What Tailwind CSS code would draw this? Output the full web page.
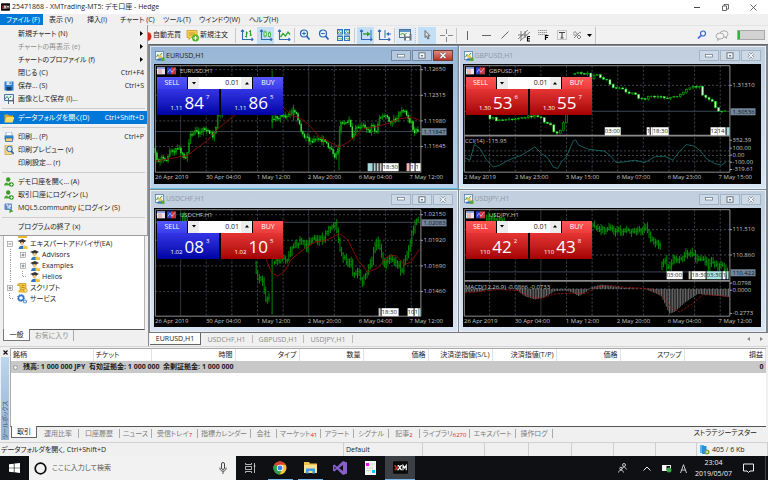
<!DOCTYPE html>
<html lang="ja">
<head>
  <meta charset="UTF-8" />
  <meta name="viewport" content="width=device-width, initial-scale=1" />
  <title>25471868 - XMTrading-MT5: デモ口座 - Hedge</title>
  <script src="https://cdn.jsdelivr.net/npm/@tailwindcss/browser@4"></script>
  <style>
    body {
      font-family: 'Open Sans', 'Noto Sans CJK JP', sans-serif;
      font-feature-settings: 'palt';
    }
    svg text {
      font-size: 6px;
    }
  </style>
</head>
<body class="h-screen flex flex-col overflow-hidden bg-[#f0f0f0] text-[7px] leading-[10px] text-[#1c1c1c] whitespace-nowrap">

  <!-- icons used more than once -->
  <svg class="hidden">
    <symbol id="i-chart" viewBox="0 0 10 10"><rect x=".5" y=".5" width="8" height="8" fill="#eef4fa" stroke="#5c7fa3" stroke-width=".8"/><path d="M1.5 6 3 3.5 4.5 5 7 2" fill="none" stroke="#3b9c3b"/><circle cx="5" cy="5.5" r="1.7" fill="#f0c048"/><path d="M2 9.5c0-3 6-3 6 0z" fill="#2f6fb5"/><path d="M6 6.5h3.5V10H6z" fill="#58a83a"/></symbol>
    <symbol id="i-user" viewBox="0 0 10 10"><circle cx="4.2" cy="2.5" r="2.2" fill="#3c9a2c"/><path d="M0 8.5C0 4 8 4 8.5 8.5z" fill="#46ab33"/><path d="M3 5l1.2 2L5.5 5z" fill="#fff"/><circle cx="7.5" cy="7.5" r="2.3" fill="#2f9424"/><path d="M6.2 7.5h2.6M7.5 6.2v2.6" stroke="#fff" stroke-width=".8"/></symbol>
    <symbol id="i-ea" viewBox="0 0 10 10"><path d="M0 2 5 0l4 2-4 2z" fill="#333"/><path d="M2.5 2.8h4v1.5h-4z" fill="#555"/><circle cx="4.5" cy="4.7" r="1.6" fill="#f1c27a"/><path d="M1 10c0-4.500 7-4.500 7 0z" fill="#2e78c4"/><path d="M5.500 6.500h1.800l.5.700H10V10H5.500z" fill="#f2c43c"/></symbol>
    <symbol id="i-plus" viewBox="0 0 6 6"><rect x=".5" y=".5" width="5" height="5" fill="#fff" stroke="#9a9a9a" stroke-width=".7"/><path d="M1.500 3h3M3 1.500v3" stroke="#456" stroke-width=".7"/></symbol>
    <symbol id="i-minus" viewBox="0 0 6 6"><rect x=".5" y=".5" width="5" height="5" fill="#fff" stroke="#9a9a9a" stroke-width=".7"/><path d="M1.500 3h3" stroke="#456" stroke-width=".7"/></symbol>
    <symbol id="i-axes" viewBox="0 0 14 12"><path d="M2.500 1v9.500H13M1 2.500 2.500 1 4 2.500M11.500 9 13 10.500 11.500 12" fill="none" stroke="#2f6cb8" stroke-width="1.100"/></symbol>
    <symbol id="i-xm" viewBox="0 0 12 10"><rect width="12" height="10" rx="1" fill="#0a0a0a"/><path d="M.8 3H2l2.500 4.200H3.200zM4 3h1.300L2 7.200H.8z" fill="#e03030"/><path d="M3.500 3h1.200l2.800 4.200H6.200zM6.200 3h1.200L4.500 7.200H3.300z" fill="#fff"/><path d="M8 7.200V3.300l1.300 2 1.300-2v3.900" fill="none" stroke="#fff" stroke-width=".9"/></symbol>
  </svg>

  <header class="h-[14px] shrink-0 bg-white flex items-center pl-px">
    <svg class="w-[9px] h-2 mr-[2px]"><use href="#i-xm"/></svg>
    <h1 class="flex-1">25471868 - XMTrading-MT5: デモ口座 - Hedge</h1>
    <button aria-label="最小化" class="w-7 h-full flex items-center justify-center"><svg width="7" height="7" fill="none" stroke="#444"><path d="M0 3.500h6"/></svg></button>
    <button aria-label="元に戻す" class="w-7 h-full flex items-center justify-center"><svg width="7" height="7" fill="none" stroke="#444" stroke-width=".8"><path d="M.5 2h4v4.500h-4zM2 2V.5h4.500V5h-2"/></svg></button>
    <button aria-label="閉じる" class="w-7 h-full flex items-center justify-center mr-px"><svg width="7" height="7" fill="none" stroke="#444" stroke-width=".8"><path d="M.5.5l6 6M6.500.5l-6 6"/></svg></button>
  </header>

  <nav class="relative z-20 h-3 shrink-0 flex border-b border-[#e4e4e4]">
    <button class="w-[43px] h-[11px] pl-[6px] text-left bg-[#0078d7] text-white">ファイル (F)</button>
    <button class="w-[38px] pl-[6px] text-left">表示 (V)</button>
    <button class="w-[33px] pl-[6px] text-left">挿入(I)</button>
    <button class="w-[43px] pl-[6px] text-left">チャート (C)</button>
    <button class="w-9 pl-[6px] text-left">ツール(T)</button>
    <button class="w-[50px] pl-[6px] text-left">ウインドウ(W)</button>
    <button class="w-10 pl-[6px] text-left">ヘルプ(H)</button>

    <!-- file menu -->
    <div id="fileMenu" class="absolute left-0 top-[11px] w-[148px] bg-[#f0f0f0] border-r border-b border-[#9c9c9c] py-[2px]"></div>
  </nav>

  <div class="h-[18px] shrink-0 flex items-center bg-[#f1f1f1] pl-[147px]">
    <svg width="5" height="12"><circle cx="0" cy="7.500" r="4.500" fill="#d42a1e"/></svg>
    <button class="w-[34px] text-left pl-px">自動売買</button>
    <button class="w-[49px] flex items-center">
      <svg width="14" height="13"><path d="M1 1.500h10v7H5l-2 2v-2H1z" fill="#f5cf55" stroke="#c89a24" stroke-width=".8"/><path d="M3 4h6M3 6h6" stroke="#b58a20" stroke-width=".8"/><circle cx="9.500" cy="9" r="3.500" fill="#52b52a"/><path d="M7.500 9h4M9.500 7v4" stroke="#fff" stroke-width="1.200"/></svg>新規注文</button>
    <span class="w-px h-[15px] bg-[#c9c9c9]"></span>
    <button aria-label="バーチャート" class="w-[21px] flex justify-center"><svg width="14" height="12"><use href="#i-axes"/><path d="M6.500 2.500v6M5 7.500h1.500M6.500 4H8M10.500 1v6M9 2.500h1.500M10.500 6H12" stroke="#2aa62a" stroke-width="1.200"/></svg></button>
    <button aria-label="ローソク足" class="w-[17px] h-[17px] bg-[#c3dff5] flex justify-center items-center"><svg width="14" height="12"><use href="#i-axes"/><path d="M6 1.500v7M10.500 2.500v6" stroke="#2aa62a" stroke-width=".8"/><rect x="5" y="3" width="2.200" height="4" fill="#eefaec" stroke="#2aa62a" stroke-width=".8"/><rect x="9.400" y="4" width="2.200" height="3.500" fill="#eefaec" stroke="#2aa62a" stroke-width=".8"/></svg></button>
    <button aria-label="ラインチャート" class="w-[20px] flex justify-center"><svg width="14" height="12"><use href="#i-axes"/><path d="M3.500 8 6 4.500 8.500 7 11 3l2 2.500" fill="none" stroke="#2aa62a" stroke-width="1.300"/></svg></button>
    <span class="w-px h-[15px] bg-[#c9c9c9]"></span>
    <button aria-label="拡大" class="w-5 flex justify-center"><svg width="12" height="12" fill="none" stroke="#2c66b4"><circle cx="5" cy="4.500" r="3.500" fill="#eaf4fc" stroke-width="1.200"/><path d="M3.200 4.500h3.600M5 2.700v3.600"/><path d="m7.500 7 3 3.500" stroke-width="1.800"/></svg></button>
    <button aria-label="縮小" class="w-[18px] flex justify-center"><svg width="12" height="12" fill="none" stroke="#2c66b4"><circle cx="5" cy="4.500" r="3.500" fill="#eaf4fc" stroke-width="1.200"/><path d="M3.200 4.500h3.600"/><path d="m7.500 7 3 3.500" stroke-width="1.800"/></svg></button>
    <button aria-label="整列" class="w-[21px] flex justify-center"><svg width="13" height="12"><path d="M0 0h6v5.500H0zM7 0h6v5.500H7zM0 6.500h6V12H0zM7 6.500h6V12H7z" fill="#2f74c0"/><path d="M1 1.500h4v3H1zM8 1.500h4v3H8zM1 8h4v3H1zM8 8h4v3H8z" fill="#e4f3e0"/><path d="m1 4 1.500-1.500L4 4l1-1.500M8 4l1.500-1.500L11 4l1-1.500M1 10.500 2.500 9 4 10.500 5 9M8 10.500 9.500 9l1.500 1.500L12 9" fill="none" stroke="#3ba53b" stroke-width=".8"/></svg></button>
    <span class="w-px h-[15px] bg-[#c9c9c9] mr-[2px]"></span>
    <button aria-label="自動スクロール" class="w-[17px] h-[17px] bg-[#c3dff5] flex justify-center items-center"><svg width="14" height="12"><use href="#i-axes"/><path d="M12 1v8" stroke="#2f6cb8"/><path d="M4 5h5" stroke="#2aa62a" stroke-width="1.400"/><path d="m8 2.500 3.500 2.500L8 7.500z" fill="#2aa62a"/></svg></button>
    <button aria-label="チャートシフト" class="w-5 flex justify-center"><svg width="14" height="12"><use href="#i-axes"/><path d="M8 1v8" stroke="#2f6cb8"/><path d="M10 5h4" stroke="#2f6cb8"/><path d="m12 3-3 2 3 2z" fill="#2f6cb8"/></svg></button>
    <span class="w-px h-[15px] bg-[#c9c9c9] mr-px"></span>
    <button aria-label="テンプレート" class="w-[19px] h-[17px] flex justify-center items-center bg-[#dcebf7]"><svg width="13" height="12"><rect x=".5" y=".5" width="11" height="8" fill="#e7f1e4" stroke="#54708c"/><path d="M1 2h10.500" stroke="#2f74c0" stroke-width="1.500"/><path d="m1.500 6 2-2 2 2 2-2" fill="none" stroke="#3ba53b"/><path d="M5 5h7.500v6.500H5z" fill="#6b7680"/><path d="M6.500 5h4v2.500h-4zM7 9h3.500v2.500H7z" fill="#fff"/></svg></button>
    <span class="w-0 h-[15px] border-l border-dotted border-[#bbb] mr-[2px]"></span>
    <button aria-label="カーソル" class="w-[18px] h-[17px] bg-[#c3dff5] flex justify-center items-center"><svg width="7" height="10"><path d="M1 .5v7l1.700-1.500L3.800 9l1.300-.5-1.200-2.700H6z" fill="#ddd" stroke="#555" stroke-width=".8"/></svg></button>
    <button aria-label="十字カーソル" class="w-5 flex justify-center"><svg width="13" height="13"><path d="M6.500 0v5M6.500 8v5M0 6.500h5M8 6.500h5" stroke="#888"/></svg></button>
    <span class="w-px h-[15px] bg-[#c9c9c9]"></span>
    <button aria-label="垂直線" class="w-5 flex justify-center"><svg width="3" height="9"><path d="M1.500 0v9" stroke="#666"/></svg></button>
    <button aria-label="水平線" class="w-[18px] flex justify-center"><svg width="9" height="3"><path d="M0 1.500h9" stroke="#666"/></svg></button>
    <button aria-label="トレンドライン" class="w-5 flex justify-center"><svg width="8" height="8"><path d="m.5 7.500 7-7" stroke="#666"/></svg></button>
    <button aria-label="チャネル" class="w-[18px] flex justify-center"><svg width="13" height="13" fill="none" stroke="#666" stroke-width=".8"><path d="m0 10 10-9M2 12 12 3M0 6h9M3 2v9M7 2v7"/><path d="M9.500 7.500v4.500H12M9.500 9.800H12M9.500 7.500H12" stroke="#000" stroke-width="1.100"/></svg></button>
    <button aria-label="フィボナッチ" class="w-5 flex justify-center"><svg width="11" height="12" fill="none" stroke="#999"><path d="M0 1.500h9M0 3.500h9M0 5.500h9" stroke-dasharray="1.500 .5"/><path d="M7.500 11V6.500H10.500M7.500 8.500H10" stroke="#000" stroke-width="1.200"/></svg></button>
    <button aria-label="テキスト" class="w-[18px] flex justify-center"><svg width="10" height="10" fill="none"><rect x=".5" y=".5" width="9" height="9" stroke="#999" stroke-dasharray="1 1"/><path d="M2 2.500h6M5 2.500V8M3.500 8h3" stroke="#444" stroke-width="1.100"/></svg></button>
    <button aria-label="図形" class="w-[22px] flex justify-center items-center gap-[5px]"><svg width="9" height="9" fill="none" stroke="#666" stroke-width=".8"><path d="m0 2.500 2-2 2 2-2 2zM4 6l2-2 2 2-2 2zM1 7l5-5M6 1l2 1"/></svg><svg width="5" height="3"><path d="M0 0h5L2.500 3z" fill="#000"/></svg></button>
    <span class="w-px h-[17px] bg-[#c4c4c4] ml-[2px]"></span>
    <div class="ml-auto flex items-center gap-2 pr-[3px]">
      <button aria-label="検索"><svg width="10" height="10" fill="none" stroke="#3767c2"><circle cx="6" cy="3.500" r="2.500" stroke-width="1.200"/><path d="m4 5.500-3 3" stroke-width="1.700"/></svg></button>
      <button aria-label="チャット"><svg width="14" height="11" fill="#f4f4f4" stroke="#999" stroke-width=".8"><ellipse cx="9" cy="4" rx="4" ry="3.200"/><ellipse cx="5" cy="6" rx="4" ry="3"/><path d="m3 8.500-.5 2 2-1.500M10 7l1.500 1.500V6.500"/></svg></button>
      <div class="w-7 h-[10px] border border-[#a8a8a8] bg-[#d2d2d2]"><div class="w-[2px] h-full bg-[#1fbf2f]"></div></div>
    </div>
  </div>

  <main class="flex-1 min-h-0 flex">
    <aside class="w-[148px] shrink-0 flex flex-col px-[3px] pt-[2px] pb-[5px]">
      <ul class="flex-1 min-h-0 bg-white border border-[#b4b4b4] border-b-[#555] pl-[2px] pb-[25px] flex flex-col justify-end overflow-hidden">
        <li class="h-[11px] flex items-center gap-1 pl-px"><svg width="6" height="6"><use href="#i-plus"/></svg><svg width="11" height="10"><path d="M1 3h4l1 1h4v6H1z" fill="#e8b830"/></svg><span class="-ml-[2px]">インディケータ</span></li>
        <li class="h-[11px] flex items-center gap-1 pl-px"><svg width="6" height="6"><use href="#i-minus"/></svg><svg width="11" height="10"><use href="#i-ea"/></svg><span class="-ml-[2px]">エキスパートアドバイザ(EA)</span></li>
        <li class="h-[11px] flex items-center gap-1 ml-1 pl-[9px] border-l border-dotted border-[#999]"><svg width="6" height="6"><use href="#i-plus"/></svg><svg width="10" height="10"><use href="#i-ea"/></svg><span class="-ml-[2px]">Advisors</span></li>
        <li class="h-[11px] flex items-center gap-1 ml-1 pl-[9px] border-l border-dotted border-[#999]"><svg width="6" height="6"><use href="#i-plus"/></svg><svg width="10" height="10"><use href="#i-ea"/></svg><span class="-ml-[2px]">Examples</span></li>
        <li class="h-[11px] flex items-center gap-1 ml-1 pl-[9px] border-l border-dotted border-[#999]"><svg width="6" height="11" fill="none" stroke="#999"><path d="M2.500 0v5.500H6" stroke-dasharray="1 1"/></svg><svg width="10" height="10"><use href="#i-ea"/></svg><span class="-ml-[2px]">Helios</span></li>
        <li class="h-[11px] flex items-center gap-1 pl-px"><svg width="6" height="6"><use href="#i-plus"/></svg><svg width="11" height="10"><path d="M2 .5h7v6H3V2.500H.5C.5 1.500 1 .5 2 .5z" fill="#f4c83c" stroke="#bd8f1a" stroke-width=".7"/><path d="M1.500 7h7.500v2.500H1.500z" fill="#eab62c"/><path d="M4.500 2.500h3M4.500 4.500h3" stroke="#a87b10" stroke-width=".7"/><circle cx="8.500" cy="7.500" r="1.800" fill="#ffe27a" stroke="#b58a20" stroke-width=".6"/></svg><span class="-ml-[2px]">スクリプト</span></li>
        <li class="h-[11px] flex items-center gap-1 pl-px"><svg width="6" height="11" fill="none" stroke="#999"><path d="M2.500 0v5.500H6" stroke-dasharray="1 1"/></svg><svg width="11" height="10" fill="none"><circle cx="4" cy="4" r="2.500" stroke="#2f78c8" stroke-width="1.500"/><circle cx="4" cy="4" r="3.600" stroke="#2f78c8" stroke-dasharray="1.200 1.200"/><circle cx="8" cy="7.500" r="1.500" stroke="#5a96d6" stroke-width="1.200"/></svg><span class="-ml-[2px]">サービス</span></li>
      </ul>
      <div class="h-[11px] shrink-0 flex text-[#8a8a8a]">
        <button class="w-[27px] bg-white border-x border-b border-[#777] -mt-px text-[#222]">一般</button>
        <button class="w-[44px] border-r border-[#aaa]">お気に入り</button>
      </div>
    </aside>

    <div class="flex-1 min-w-0 flex flex-col border-l border-[#8c8c8c]">
      <div id="charts" class="flex-1 min-h-0 grid grid-cols-2 grid-rows-2 gap-px bg-[#7d868f] border-t border-[#666] pl-px pt-px pr-[2px]"></div>
      <div class="h-[14px] shrink-0 flex border-t border-[#777] text-[#8a8a8a] pl-px pb-px">
        <button class="w-[51px] bg-white text-[#222] border-r border-b border-[#666]">EURUSD,H1</button>
        <button class="w-[52px] border-r border-[#bbb] my-[2px] leading-none">USDCHF,H1</button>
        <button class="w-[51px] border-r border-[#bbb] my-[2px] leading-none">GBPUSD,H1</button>
        <button class="w-[49px] border-r border-[#bbb] my-[2px] leading-none">USDJPY,H1</button>
        <span class="ml-auto flex items-center gap-[10px] pr-[5px]"><svg width="3" height="4"><path d="M3 0v4L0 2z" fill="#888"/></svg><svg width="3" height="4"><path d="M0 0v4l3-2z" fill="#888"/></svg></span>
      </div>
    </div>
  </main>

  <section class="h-[96px] shrink-0 flex border-t border-[#d5d5d5] pt-px">
    <div class="w-[10px] shrink-0 flex flex-col items-center">
      <button aria-label="閉じる" class="h-[9px]"><svg width="5" height="5" stroke="#111" stroke-width="1.200"><path d="m.5.5 4 4M4.500.5l-4 4"/></svg></button>
      <div class="flex-1 w-2 mb-[2px] pb-px bg-gradient-to-b from-[#bcd6f0] to-[#94b0cf] flex items-end justify-center"><span class="[writing-mode:vertical-rl] [text-orientation:sideways] rotate-180 text-[6px] leading-[8px] text-[#34506c]">ツールボックス</span></div>
    </div>
    <div class="flex-1 min-w-0 flex flex-col">
      <div class="flex-1 bg-white border-t border-l border-[#aaa] border-b border-b-[#555] mr-[2px]">
        <table class="w-full table-fixed border-collapse">
          <colgroup>
            <col class="w-[82px]"><col class="w-[58px]"><col class="w-[84px]"><col class="w-16"><col class="w-16"><col class="w-[65px]"><col class="w-16"><col class="w-16"><col class="w-16"><col class="w-16"><col>
          </colgroup>
          <thead>
            <tr class="h-3 text-right *:font-normal *:p-0 *:pr-[2px] *:border-r *:border-[#e2e2e2]">
              <th class="text-left pl-[2px]!">銘柄</th><th class="text-left pl-[2px]!">チケット</th><th>時間</th><th>タイプ</th><th>数量</th><th>価格</th><th>決済逆指値(S/L)</th><th>決済指値(T/P)</th><th>価格</th><th>スワップ</th><th>損益</th>
            </tr>
          </thead>
          <tbody>
            <tr class="h-3 bg-[#c8c8c8] font-bold">
              <td colspan="10" class="p-0 pl-[2px]"><span class="flex items-center"><svg class="mr-[5px]" width="5" height="5"><circle cx="2.500" cy="2.500" r="2" fill="#eee" stroke="#999"/></svg>残高: 1 000 000 JPY&nbsp; 有効証拠金: 1 000 000&nbsp; 余剰証拠金: 1 000 000</span></td>
              <td class="p-0 pr-[2px] text-right">0</td>
            </tr>
          </tbody>
        </table>
      </div>
      <div class="h-[15px] shrink-0 flex text-[#7c7c7c] pl-px">
        <button class="w-[26px] h-3 -mt-px bg-white border-x border-b border-[#666] text-[#111] mr-px">取引</button>
        <div id="toolTabs" class="flex h-[9px] mt-[2px]"></div>
        <button class="h-3 ml-auto pr-[11px] text-[#222]">ストラテジーテスター</button>
      </div>
    </div>
  </section>

  <footer class="h-[14px] shrink-0 flex items-center border-t border-[#d0d0d0] *:h-full *:flex *:items-center *:border-r *:border-[#cfcfcf]">
    <span class="flex-1 pl-px">データフォルダを開く, Ctrl+Shift+D</span>
    <span class="w-[79px] pl-[2px]">Default</span>
    <span class="w-[62px]"></span><span class="w-[44px]"></span><span class="w-[43px]"></span><span class="w-[42px]"></span><span class="w-[42px]"></span><span class="w-[41px]"></span>
    <span class="w-[71px] border-r-0 pl-[2px] gap-[2px]"><svg width="11" height="11"><path d="M1 1h4v8H1z" fill="#5cb4ec"/><path d="M3 2h4.500v8H3z" fill="#2c8ed8"/><circle cx="8" cy="8" r="2.500" fill="#7aa83c"/><path d="M7 8h2M8 7v2" stroke="#fff" stroke-width=".7"/></svg>405 / 6 Kb</span>
  </footer>

  <div class="h-6 shrink-0 bg-[#0e1013] text-[#f0f0f0] flex items-stretch">
    <button aria-label="スタート" class="w-[29px] flex items-center justify-center"><svg width="11" height="10" fill="#fff"><path d="M0 1.300 4.800.7v4H0zM5.500.6 11 0v4.700H5.500zM0 5.300h4.800v4L0 8.700zM5.500 5.300H11V10l-5.500-.7z"/></svg></button>
    <label class="w-[207px] bg-[#f2f2f2] text-[#555] flex items-center pl-[5px] pr-[9px]">
      <svg width="13" height="13"><circle cx="6.500" cy="6.500" r="5.300" fill="none" stroke="#0c0c0c" stroke-width="1.700"/></svg>
      <input type="search" aria-label="検索" placeholder="ここに入力して検索" class="flex-1 min-w-0 pl-[5px] outline-none placeholder:text-[#555]" />
      <svg width="8" height="12" fill="none" stroke="#444"><rect x="2.500" y=".5" width="3" height="7" rx="1.500"/><path d="M.8 5.500c0 5 6.400 5 6.400 0M4 9.200V12" stroke-width=".9"/></svg>
    </label>
    <button aria-label="タスク ビュー" class="w-[29px] flex items-center justify-center"><svg width="11" height="10" fill="none" stroke="#ddd" stroke-width=".8"><path d="M.5 0v1.500h6V0M.5 10V8.500h6V10M.5 3.500h6v3h-6zM9.500 0v10M8.500 3h2"/></svg></button>
    <button aria-label="Chrome" class="w-[30px] flex flex-col items-center justify-between pt-[5px]"><svg width="14" height="14"><circle cx="7" cy="7" r="6.500" fill="#f7c52c"/><path d="M7 7 1.400 3.700A6.500 6.500 0 0 1 12.700 3.800H7z" fill="#e0402f"/><path d="M7 7 1.400 3.700A6.500 6.500 0 0 0 6.500 13.500L9.500 8.500z" fill="#2f9e4c"/><circle cx="7" cy="7" r="3.200" fill="#fff"/><circle cx="7" cy="7" r="2.400" fill="#3d7de4"/></svg><i class="w-[25px] h-px bg-[#76b9ed]"></i></button>
    <button aria-label="エクスプローラー" class="w-[30px] flex flex-col items-center justify-between pt-[6px]"><svg width="13" height="12"><path d="M0 0h5l1 1.500h7V11H0z" fill="#f0c14c"/><path d="M0 3h13v8H0z" fill="#fbe08c"/><path d="M2 6.500h9v5H8.500V9h-4v2.500H2z" fill="#3aa0df"/></svg><i class="w-[25px] h-px bg-[#76b9ed]"></i></button>
    <button aria-label="Visual Studio" class="w-[30px] flex items-center justify-center"><svg width="14" height="14"><path d="m10 0 4 1.500v11L10 14 4 8.300 1.500 10.500 0 9.700V4.300l1.500-.8L4 5.700z" fill="#8661c5"/><path d="M10 4v6L6 7zM1.500 5.500v3L3 7z" fill="#0e1013"/></svg></button>
    <button aria-label="ドキュメント" class="w-[30px] flex items-center justify-center"><svg width="11" height="14"><path d="M0 0h11v14H0z" fill="#f4f4f4"/><path d="M1 2h3v3H1z" fill="#f0f"/><path d="M7 9h3v3H7z" fill="#0cf"/><path d="M5.500 3h4M2 7h6M1.500 9.500h4" stroke="#bbb" stroke-dasharray="1 .7"/></svg></button>
    <button aria-label="XMTrading" class="w-[30px] flex flex-col items-center justify-between pt-[5px] bg-[#3c3f43]"><svg width="15" height="13"><use href="#i-xm"/></svg><i class="w-full h-px bg-[#76b9ed]"></i></button>
    <div class="ml-auto flex items-center">
      <svg class="mr-4" width="9" height="10" fill="none" stroke="#eee" stroke-width=".8"><circle cx="6" cy="2" r="1.500"/><path d="M3.800 6c.5-2.500 4-2.500 4.500.5"/><circle cx="3" cy="5.500" r="1.300"/><path d="M.5 9.500c.3-3 4.700-3 5 0"/></svg>
      <svg class="mr-[11px]" width="8" height="5" fill="none" stroke="#eee"><path d="m.5 4.500 3.500-3.500 3.500 3.500"/></svg>
      <svg class="mr-2" width="10" height="9"><rect x=".5" y="1.500" width="8" height="5" fill="none" stroke="#eee"/><path d="M1 2h3.500v4H1z" fill="#fff"/><circle cx="7" cy="6" r="2.500" fill="#39a843"/></svg>
      <svg class="mr-[7px]" width="7" height="9" fill="none" stroke="#ddd" stroke-width=".9"><path d="m.5 9 3-8.300L6.500 9M1.500 6h4"/></svg>
      <time class="w-[39px] text-center leading-[11px]">23:04<br>2019/05/07</time>
      <svg class="ml-[10px] mr-[11px]" width="11" height="11" fill="none" stroke="#eee"><path d="M.5 1h10v7H7L5.500 9.500 4 8H.5z"/></svg>
      <span class="w-[3px] h-6 border-l border-[#444]"></span>
    </div>
  </div>

  <script>
    // ---- file menu ----
    const icons = {
      save: '<path d="M.5.5h9v9h-9z" fill="#2d7fd0"/><path d="M2.500.5h5v3.500h-5z" fill="#dbeaf8"/><path d="M2.500 6h5v3.500h-5z" fill="#173f70"/><path d="M5.500 1.200h1.300v2H5.500z" fill="#2d7fd0"/>',
      image: '<path d="M.5.5h9v6h-9z" fill="#dfeef9" stroke="#4a76a8"/><path d="m1 5 2-2.500L5 5l2-3" fill="none" stroke="#3b9c3b"/><path d="M4 4h6v6H4z" fill="#5a6b7c"/><path d="M5 4h3.500v2H5zM5 7.500h4V10H5z" fill="#fff"/>',
      folder: '<path d="M.5 1.500h3.500l1 1h4V9H.5z" fill="#d9a528"/><path d="M2.500 4h8L8.500 9.500H.5z" fill="#fbdc6c"/>',
      print: '<path d="M2 0h5l1 1v3H2z" fill="#fff" stroke="#7a9cbc" stroke-width=".7"/><path d="M.5 3.500h9v4h-9z" fill="#3287cf"/><path d="M1.500 6h7v3.500h-7z" fill="#f3d070" stroke="#1f5f9c" stroke-width=".7"/>',
      preview: '<path d="M1 0h7v9.500H1z" fill="#f0d890" stroke="#c29a3c" stroke-width=".7"/><circle cx="5.500" cy="4" r="2.700" fill="#d6ecfb" stroke="#2c66b4"/><path d="m7.300 6 2.500 3" stroke="#2c66b4" stroke-width="1.700"/>',
      user: '<use href="#i-user"/>',
      mql: '<rect x=".5" y=".5" width="7.500" height="6.500" rx="1" fill="#5b88c8"/><path d="M2 2h2v3.500M5 2.200h1.500v1.500H5v1.500h1.500" fill="none" stroke="#fff" stroke-width=".9"/><path d="M5.500 6v4l4-2z" fill="#3fa32d"/>',
    };
    const menu = [
      { text: '新規チャート (N)', sub: true },
      { text: 'チャートの再表示 (e)', sub: true, off: true },
      { text: 'チャートのプロファイル (f)', sub: true },
      { text: '閉じる (C)', key: 'Ctrl+F4' },
      { text: '保存... (S)', key: 'Ctrl+S', icon: 'save' },
      { text: '画像として保存 (I)...', icon: 'image' },
      null,
      { text: 'データフォルダを開く(D)', key: 'Ctrl+Shift+D', icon: 'folder', on: true },
      null,
      { text: '印刷... (P)', key: 'Ctrl+P', icon: 'print' },
      { text: '印刷プレビュー (v)', icon: 'preview' },
      { text: '印刷設定... (r)' },
      null,
      { text: 'デモ口座を開く... (A)', icon: 'user' },
      { text: '取引口座にログイン (L)', icon: 'user' },
      { text: 'MQL5.community にログイン (S)', icon: 'mql' },
      null,
      { text: 'プログラムの終了 (x)' },
    ];
    document.getElementById('fileMenu').innerHTML = menu.map(m => !m
      ? '<div class="h-[6px] flex items-center px-[2px]"><hr class="w-full border-[#cdcdcd]"></div>'
      : `<button class="w-full h-[13px] flex items-center pl-1 pr-[3px] ${m.on ? 'bg-[#0078d7] text-white' : ''} ${m.off ? 'text-[#8d8d8d]' : ''}">
          <svg class="mr-1" width="10" height="10">${icons[m.icon] || ''}</svg>
          <span class="flex-1 text-left">${m.text}</span>${m.key || ''}
          ${m.sub ? '<svg class="mr-px" width="3" height="5"><path d="M0 0v5l3-2.500z"/></svg>' : ''}
        </button>`).join('');

    // ---- toolbox tabs ----
    const tabs = [
      ['運用比率', 'w-[41px]'], ['口座履歴', 'w-[41px]'], ['ニュース', 'w-8'], ['受信トレイ', 'w-[46px]', 7],
      ['指標カレンダー', 'w-[53px]'], ['会社', 'w-[26px]'], ['マーケット', 'w-11', 41], ['アラート', 'w-[33px]'],
      ['シグナル', 'w-[35px]'], ['記事', 'w-[31px]', 2], ['ライブラリ', 'w-[50px]', 6270], ['エキスパート', 'w-[46px]'], ['操作ログ', 'w-[37px]'],
    ];
    document.getElementById('toolTabs').innerHTML = tabs.map(([t, w, n]) =>
      `<button class="${w} flex justify-center items-center border-r border-[#aaa]">${t}${n ? `<span class="text-[6px] text-[#e02020] pt-[3px]">${n}</span>` : ''}</button>`).join('');

    // ---- charts ----
    // plot data is kept at 3 units per pixel, labels are in pixels
    const charts = [
      {
        name: 'EURUSD', active: true, lot: '0.01', sell: ['1.11', '84', '7', 'blue'], buy: ['1.11', '86', '5', 'blue'],
        step: 4.8, kind: 'candle', grid: [16, 93, 170, 247], days: [80, 465], price: [202, '1.11847'],
        data: ['4,253 18,295 32,278 44,288 50,265 67,261 77,248 87,268 100,281 107,253 114,208 127,205 142,203 154,193 162,198 172,205 182,213 190,193 197,148 212,143 230,110', '356,173 377,158 392,151 407,155 418,138 432,153 442,173 447,205 462,223 477,235 492,228 502,225 517,231 527,243 537,258 547,278 554,273 558,253 564,183 572,173 582,178 594,163 600,218 612,191 627,183 637,188 652,201 662,183 672,205 682,168 697,155 717,175 737,158 757,135 767,168 779,173 785,208 794,201'],
        spikes: [[355, 18, 193], [556, 240, 318], [419, 122, 170]],
        ma: '4,291 52,283 102,273 127,253 162,228 192,193 227,165 300,110 387,128 417,155 432,158 462,178 497,218 532,236 557,248 582,235 632,193 662,189 702,178 742,163 772,158 797,168',
        labels: [[16, '1.12650'], [93, '1.12315'], [170, '1.11980'], [247, '1.11645']],
        times: ['26 Apr 2019', '30 Apr 04:00', '1 May 12:00', '2 May 20:00', '6 May 04:00', '7 May 12:00'],
        tagY: 99, tags: [[214, 5, '#a6d8d8', ''], [220, 2, '#a6d8d8', ''], [223, 2, '#ccc', ''], [226, 2, '#ccc', ''], [229, 16, '#fff', '18:30'], [253, 3, '#f0b4b4', ''], [257, 4, '#fff', '1'], [262, 5, '#fff', '1']],
      },
      {
        name: 'GBPUSD', lot: '0.01', sell: ['1.30', '53', '6', 'red'], buy: ['1.30', '55', '7', 'red'],
        step: 9.6, kind: 'wide', grid: [63], days: [], price: [141, '1.30536'], split: 214,
        data: ['81,150 91,165 101,161 111,171 126,165 156,165 171,165 191,158 221,156 236,158 248,163 256,178 271,180 283,205 291,205 308,193 316,158 325,90', '336,31 351,23 366,28 386,25 391,43 398,33 406,28 416,35 426,46 441,48 456,68 476,73 491,73 506,88 521,85 536,98 548,105 566,98 586,98 626,101 651,98 676,81 698,68 721,68 726,93 746,101 761,113 771,138 781,143 794,138'],
        spikes: [], subGrid: [260, 274, 291],
        cci: '6,281 21,288 34,241 51,253 71,288 91,308 106,305 136,288 176,273 216,248 236,268 256,283 271,308 284,313 296,293 311,278 331,230 338,227 348,243 376,255 426,261 441,273 461,295 486,293 516,288 546,295 576,278 606,276 631,288 651,261 671,241 696,246 716,263 731,283 756,298 776,303 791,293',
        note: 'CCI(14) -115.95',
        labels: [[63, '1.31310'], [228, '352.39'], [252, '100.00'], [273, '0.00'], [294, '-100.00'], [316, '-319.61']],
        times: ['2 May 2019', '2 May 23:00', '3 May 15:00', '6 May 07:00', '6 May 23:00', '7 May 15:00'],
        tagY: 63, tags: [[142, 16, '#fff', '03:00'], [184, 3, '#fff', '1'], [188, 2, '#fff', ''], [190, 16, '#fff', '18:30'], [248, 7, '#fff', '12'], [255, 8, '#fff', '14:'], [264, 3, '#a6d8d8', '']],
      },
      {
        name: 'USDCHF', lot: '0.01', sell: ['1.02', '08', '3', 'blue'], buy: ['1.02', '10', '5', 'red'],
        step: 4.8, kind: 'bar', grid: [19, 96, 173, 250], days: [80, 465], price: [42, '1.02083'],
        data: ['86,30 92,24 100,40 108,80', '307,164 314,204 322,214 332,219 340,274 350,274', '362,164 377,159 392,144 407,154 417,119 432,109 444,99 452,94 462,119 472,99 492,94 512,89 527,69 542,44 552,49 560,109 572,144 587,164 597,164 604,199 617,189 632,219 647,189 657,164 672,99 682,109 694,169 707,154 717,149 737,169 752,189 762,144 772,119 782,64 795,39'],
        spikes: [[355, 150, 319]],
        ma: '337,154 354,194 372,204 392,189 412,154 442,129 482,102 522,94 557,76 582,94 612,154 642,192 672,179 702,144 727,141 752,169 772,161 797,124',
        labels: [[19, '1.02150'], [96, '1.01920'], [173, '1.01690'], [250, '1.01460']],
        times: ['26 Apr 2019', '30 Apr 04:00', '1 May 12:00', '2 May 20:00', '6 May 04:00', '7 May 12:00'],
        tagY: 100, tags: [[225, 2, '#ccc', ''], [228, 17, '#fff', '18:30'], [254, 6, '#fff', '10'], [261, 4, '#fff', '1'], [265, 2, '#a6d8d8', '']],
      },
      {
        name: 'USDJPY', lot: '0.01', sell: ['110', '42', '2', 'red'], buy: ['110', '43', '8', 'red'],
        step: 4.8, kind: 'bar', grid: [64, 140], days: [234, 618], price: [191, '110.422'], split: 218,
        data: ['71,34 86,29 106,31 126,37', '391,49 401,61 426,64 446,59 466,67 486,64 501,72 526,67 556,61 566,89 581,99 596,114', '598,174 611,154 621,184 631,169 636,149 656,154 676,137 696,139 711,159 726,147 741,174 751,157 766,174 786,171 796,199'],
        spikes: [], subGrid: [242],
        macd: '6,251 46,251 76,244 126,242 156,242 186,264 216,274 246,267 276,249 311,247 331,254 348,264 371,251 386,237 416,229 446,234 486,239 546,242 576,254 596,264 621,317 636,311 666,284 706,257 746,261 798,266',
        signal: '6,254 46,251 106,244 166,247 206,267 231,271 276,257 336,254 371,257 396,239 436,231 486,237 566,242 596,259 626,299 651,311 686,289 721,259 756,261 798,265',
        note: 'MACD(12,26,9) -0.0866 -0.0733',
        labels: [[64, '111.510'], [140, '110.860'], [225, '0.0798'], [246, '0.0000'], [316, '-0.2773']],
        times: ['26 Apr 2019', '30 Apr 04:00', '1 May 12:00', '2 May 20:00', '6 May 04:00', '7 May 12:00'],
        tagY: 63, tags: [[204, 16, '#fff', '03:00'], [226, 2, '#ccc', ''], [229, 14, '#fff', '18:30'], [244, 15, '#a9e4e4', '03:30'], [260, 3, '#fff', '1'], [264, 2, '#a9e4e4', '']],
      },
    ];

    const points = s => s.split(' ').map(p => p.split(',').map(Number));
    const noise = i => Math.abs(Math.sin(i * 12.9898) * 43758.5453) % 1;

    function sample(pts, x) {
      for (let i = 1; i < pts.length; i++) {
        if (x <= pts[i][0]) {
          const [x0, y0] = pts[i - 1], [x1, y1] = pts[i];
          return y0 + (y1 - y0) * (x - x0) / (x1 - x0);
        }
      }
      return pts[pts.length - 1][1];
    }

    function drawPrices(c) {
      let out = '';
      c.data.forEach(seg => {
        const pts = points(seg);
        let open = pts[0][1];
        for (let x = pts[0][0]; x <= pts[pts.length - 1][0]; x += c.step) {
          const amp = c.kind === 'wide' ? 6 : 13;
          const close = sample(pts, x + c.step) + (noise(x) - .5) * amp;
          const hi = Math.min(open, close) - noise(x + 1) * amp;
          const lo = Math.max(open, close) + noise(x + 2) * amp;
          if (c.kind === 'bar') {
            out += `<path d="M${x} ${hi - 3}V${lo + 3}M${x - 2} ${open}H${x}M${x} ${close}h2" stroke="#00a400" stroke-width="2.600"/>`;
          } else {
            const w = c.kind === 'wide' ? 6 : 2.6;
            const down = close > open;
            out += `<path d="M${x} ${hi}V${lo}" stroke="#00c800" stroke-width="1.800"/>
              <rect x="${x - w / 2}" y="${Math.min(open, close)}" width="${w}" height="${Math.max(2, Math.abs(close - open))}" fill="${down ? '#d8ffd8' : '#001800'}" stroke="#00d000" stroke-width="1.500"/>`;
          }
          open = close;
        }
      });
      c.spikes.forEach(([x, a, b]) => out += `<path d="M${x} ${a}V${b}" stroke="#00a000" stroke-width="2.500"/>`);
      return out;
    }

    function drawChart(c) {
      let g = '';
      for (let i = 0; i < 10; i++) {
        const x = 80 + i * 77;
        g += `<path d="M${x} 4V324" stroke="${c.days.includes(x) ? '#5c646c' : '#3e464e'}" stroke-width="3" stroke-dasharray="${c.days.includes(x) ? '3 3' : '6 6'}"/>`;
      }
      [...c.grid, ...(c.subGrid || [])].forEach(y => g += `<path d="M4 ${y}H802" stroke="#3e464e" stroke-width="3" stroke-dasharray="6 6"/>`);
      g += `<path d="M4 ${c.price[0]}H802" stroke="#3b4654" stroke-width="3"/>`;
      g += drawPrices(c);
      if (c.ma) g += `<polyline points="${c.ma}" fill="none" stroke="#a00808" stroke-width="2.500"/>`;
      if (c.cci) g += `<polyline points="${c.cci}" fill="none" stroke="#187070" stroke-width="2.500"/>`;
      if (c.macd) {
        const pts = points(c.macd);
        for (let x = 6; x < 800; x += 4.8) g += `<path d="M${x} 242V${sample(pts, x)}" stroke="#8c8c8c" stroke-width="2.400"/>`;
        g += `<polyline points="${c.signal}" fill="none" stroke="#b01010" stroke-width="2.500" stroke-dasharray="7 4"/>`;
      }
      if (c.split) g += `<path d="M4 ${c.split}H802" stroke="#8a8a8a" stroke-width="5"/>`;
      g += '<path d="M4 4H802V324H4z" fill="none" stroke="#8e8e8e" stroke-width="3"/>';
      c.labels.forEach(([y]) => g += `<path d="M802 ${y}h6" stroke="#aaa" stroke-width="3"/>`);

      let t = c.labels.map(([y, s]) => `<text x="270" y="${Math.round(y / 3) + 2}">${s}</text>`).join('');
      t += c.times.map((s, i) => `<text x="${1 + i * 51}" y="115">${s}</text>`).join('');
      t += `<rect x="268" y="${Math.round(c.price[0] / 3) - 3}" width="25" height="7" fill="#74869a"/><text x="270" y="${Math.round(c.price[0] / 3) + 3}" fill="#0c1218">${c.price[1]}</text>`;
      t += c.tags.map(([x, w, f, s]) => `<rect x="${x}" y="${c.tagY}" width="${w}" height="8" fill="${f}"/><text x="${x}" y="${c.tagY + 6}" fill="#222">${s}</text>`).join('');
      if (c.note) t += `<text x="2" y="${Math.round(c.split / 3) + 8}">${c.note}</text>`;
      t += `<text x="26" y="9">${c.name},H1</text>`;
      t += '<rect x="3" y="3" width="8" height="7" fill="#e9e4f4"/><path d="M3 3h8v1.500H3z" fill="#7a94dc"/><path d="M5 5v5M7 5v5" stroke="#d88"/>';
      t += '<path d="M13 3h5v7h-5z" fill="#2b3fd0"/><path d="M17 3h5v7h-5z" fill="#c83838"/><path d="m14 8 2-3 2 3 3-4" fill="none" stroke="#cdd6ff" stroke-width=".7"/>';
      return `<svg class="block w-full h-full" viewBox="0 0 299 119" fill="#c4c4c4"><g transform="scale(.33333)">${g}</g>${t}</svg>`;
    }

    const head = { blue: 'bg-gradient-to-b from-[#5656ff] to-[#3c3cec]', red: 'bg-gradient-to-b from-[#ff5656] to-[#ec3c3c]' };
    const body = { blue: 'bg-gradient-to-b from-[#3434e6] to-[#0000a4]', red: 'bg-gradient-to-b from-[#e63434] to-[#a40000]' };

    function quote([small, big, sup, color]) {
      return `<div class="${body[color]} flex justify-center items-end text-white pb-[3px] pl-1">
          <span class="text-[6px] leading-[8px] pr-[2px]">${small}</span><span class="text-[17px] leading-[18px]">${big}</span><span class="text-[6px] leading-[8px] pl-[2px] self-start pt-[4px]">${sup}</span>
        </div>`;
    }

    function chartWindow(c) {
      const frame = c.active
        ? 'bg-gradient-to-b from-[#9ab6d6] to-[#b9d1ea] border-[#d4e4f4] border-b-[#5cc4dc] border-r-[#5cc4dc] text-[#222]'
        : 'bg-gradient-to-b from-[#c0cedd] to-[#d7e4f2] border-[#e8eff6] text-[#8d98a4]';
      const btn = c.active ? 'border-[#7288a2] bg-[#b4c9e0]' : 'border-[#a5b4c4] bg-[#ccd9e6]';
      const close = c.active ? 'border-[#6c3a36] bg-gradient-to-b from-[#dc8a7e] to-[#b83424]' : btn;
      return `<article class="min-h-0 min-w-0 flex flex-col border ${frame} pl-[3px] pr-1 pb-1">
          <header class="h-[17px] shrink-0 flex items-center gap-px">
            <svg class="ml-px" width="10" height="10"><use href="#i-chart"/></svg><h2 class="flex-1">${c.name},H1</h2>
            <button aria-label="最小化" class="w-5 h-[11px] border ${btn} flex items-center justify-center"><svg width="8" height="4"><rect x=".5" y=".5" width="7" height="2.500" fill="#fff" stroke="#66727f" stroke-width=".7"/></svg></button>
            <button aria-label="最大化" class="w-5 h-[11px] border ${btn} flex items-center justify-center"><svg width="8" height="7"><rect x="1" y=".8" width="6" height="5.400" fill="#fff" stroke="#66727f"/><path d="M3 3h2v1.500H3z" fill="#66727f"/></svg></button>
            <button aria-label="閉じる" class="w-5 h-[11px] border ${close} flex items-center justify-center"><svg width="8" height="7" fill="none"><path d="m1.500 1 5 5M6.500 1l-5 5" stroke="#5c6670" stroke-width="2.400"/><path d="m1.500 1 5 5M6.500 1l-5 5" stroke="#fff" stroke-width="1.400"/></svg></button>
          </header>
          <div class="relative flex-1 min-h-0 bg-black">
            ${drawChart(c)}
            <div class="absolute left-[3px] top-[13px] w-[126px] text-white bg-black">
              <div class="h-3 flex gap-px">
                <button class="w-[30px] shrink-0 ${head[c.sell[3]]}">SELL</button>
                <div class="flex-1 min-w-0 bg-white text-[#222] flex items-center">
                  <button aria-label="減らす" class="w-[11px] shrink-0 h-full bg-[#ececec] flex items-center justify-center"><svg width="4" height="3"><path d="M0 0h4L2 2.500z"/></svg></button>
                  <input aria-label="${c.name} 数量" value="${c.lot}" class="flex-1 w-0 min-w-0 text-right outline-none pr-[2px]" />
                  <button aria-label="増やす" class="w-[11px] shrink-0 h-full bg-[#ececec] flex items-center justify-center"><svg width="4" height="3"><path d="M0 2.500h4L2 0z"/></svg></button>
                </div>
                <button class="w-[30px] shrink-0 ${head[c.buy[3]]}">BUY</button>
              </div>
              <div class="h-[26px] grid grid-cols-2 gap-x-[2px]">${quote(c.sell)}${quote(c.buy)}</div>
            </div>
          </div>
        </article>`;
    }

    document.getElementById('charts').innerHTML = charts.map(chartWindow).join('');
  </script>
</body>
</html>
